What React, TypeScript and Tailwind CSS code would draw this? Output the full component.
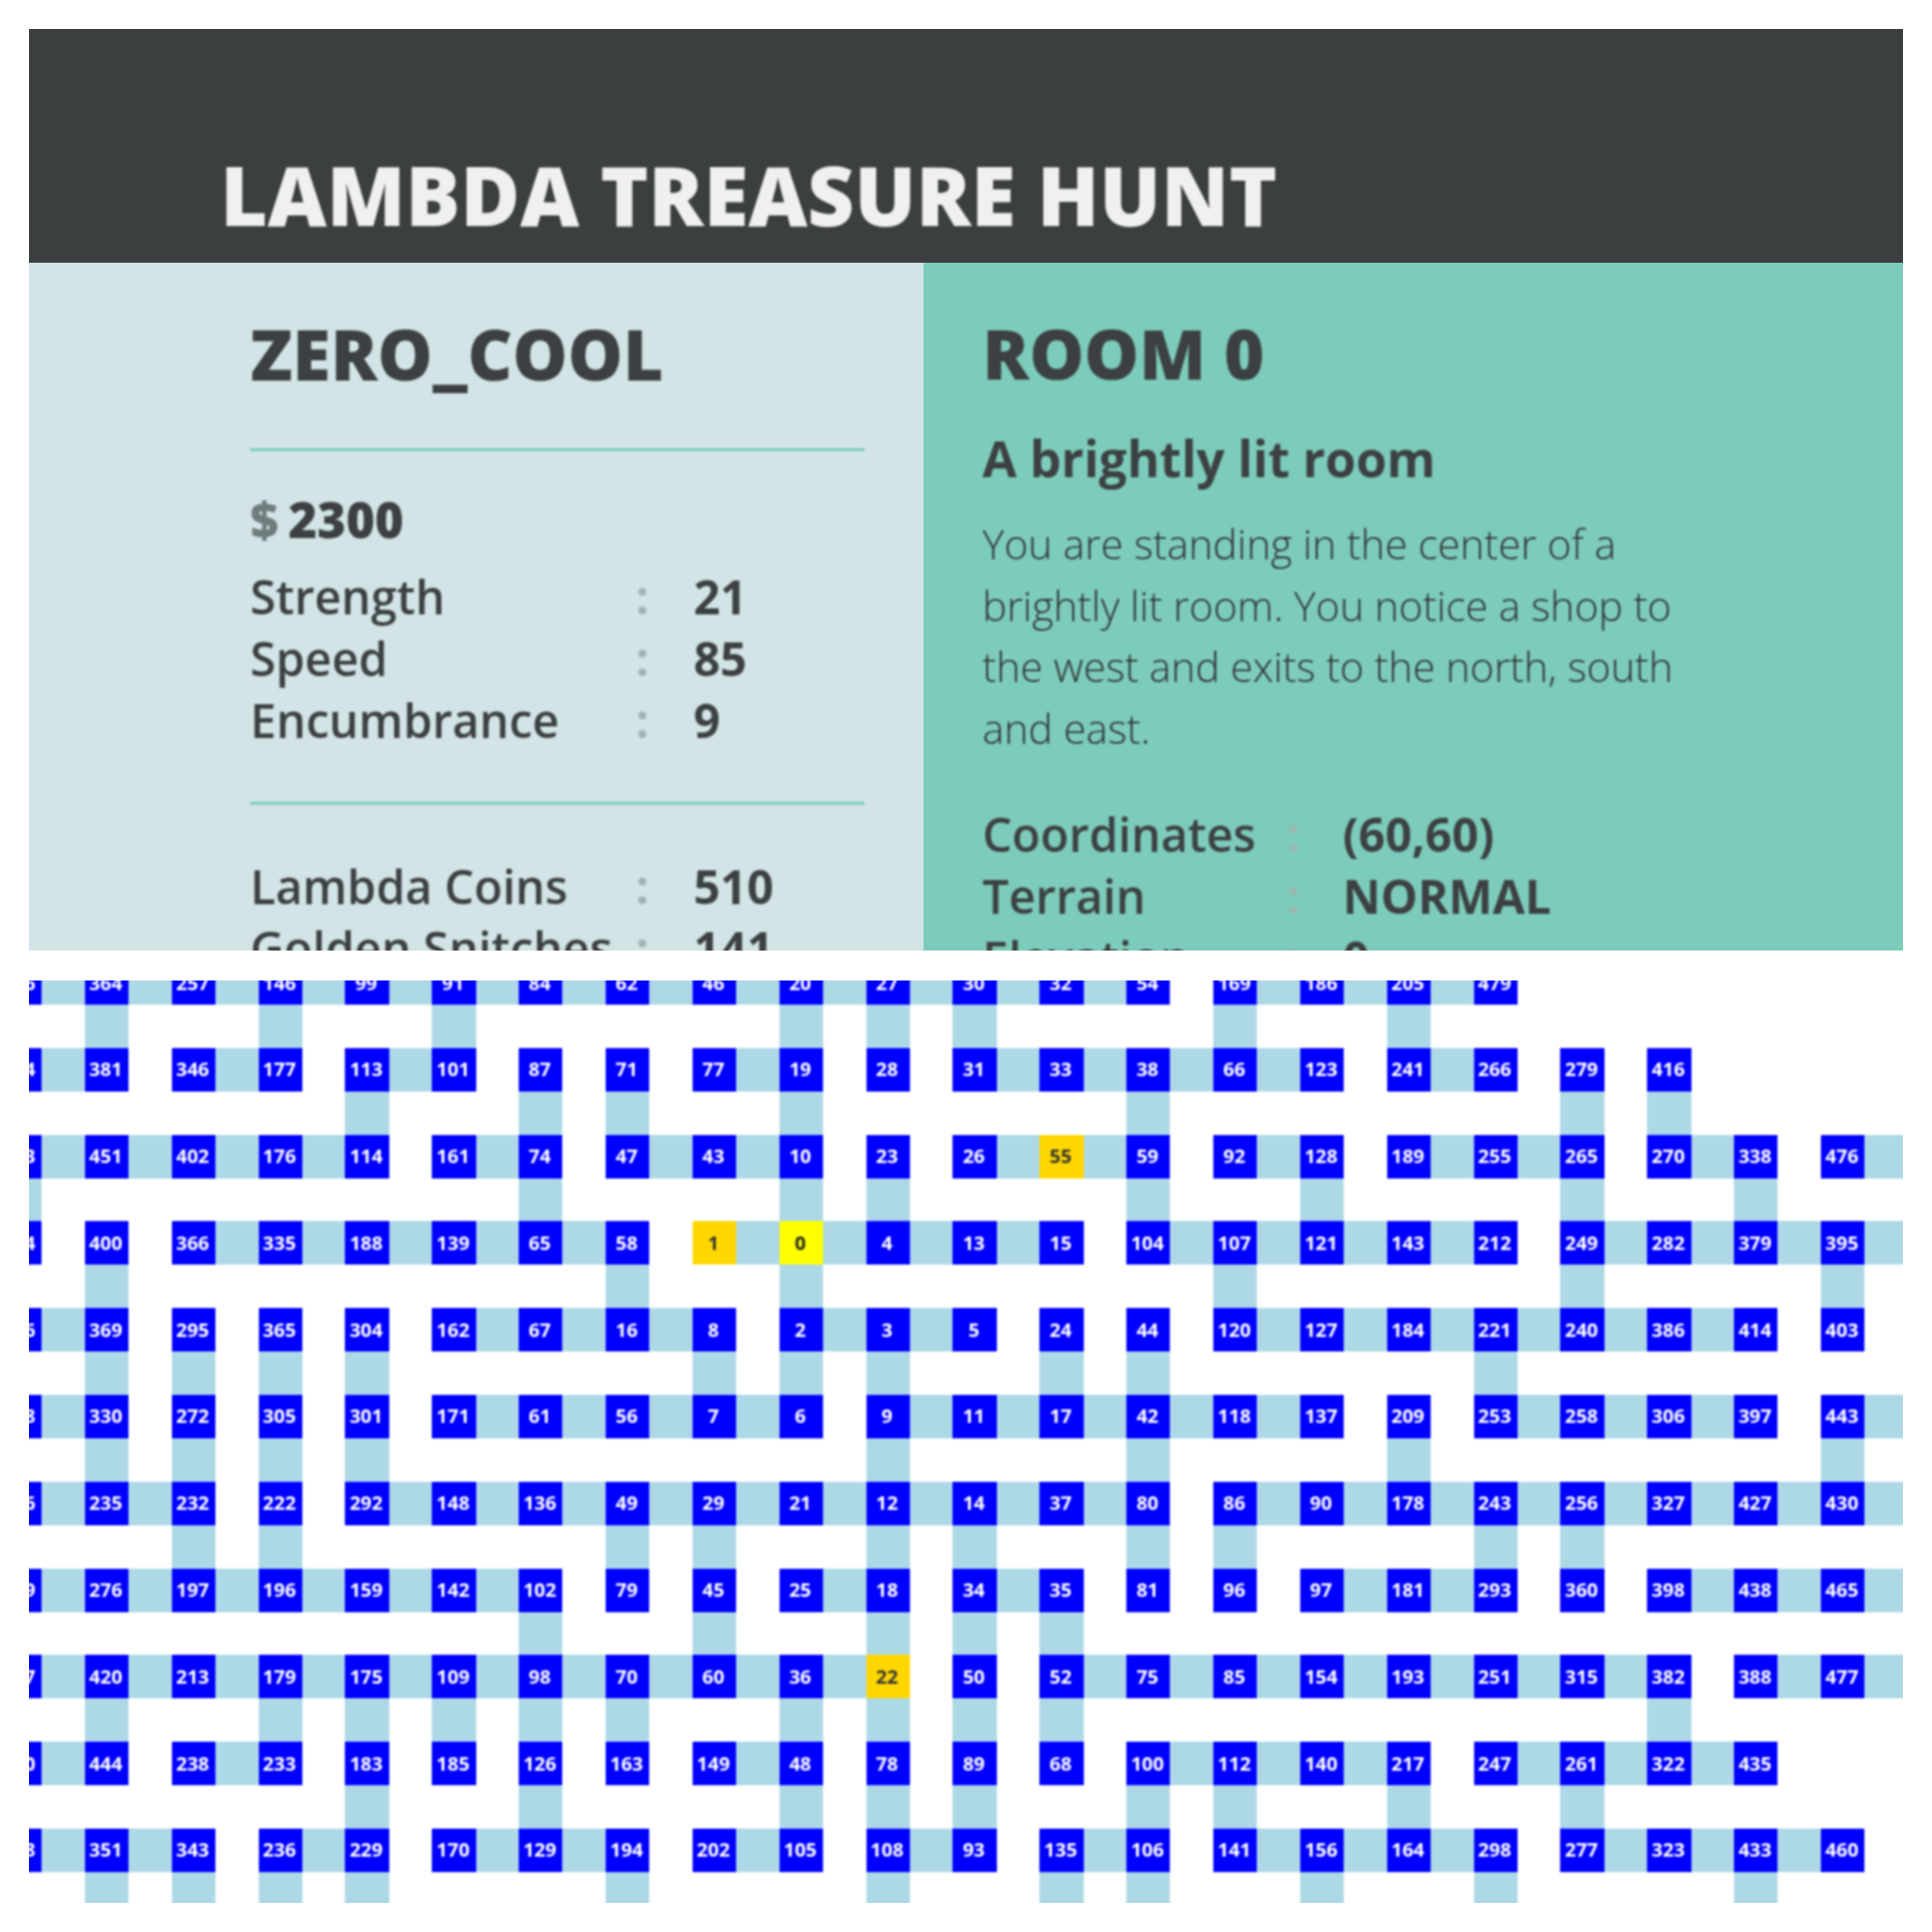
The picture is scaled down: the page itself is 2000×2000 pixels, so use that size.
const ROWS: string[] = [
  '396 364 257 146 99 91 84 62 46 20 27 30 32 54 169 186 205 479 - - - -',
  '424 381 346 177 113 101 87 71 77 19 28 31 33 38 66 123 241 266 279 416 - -',
  '453 451 402 176 114 161 74 47 43 10 23 26 55 59 92 128 189 255 265 270 338 476',
  '434 400 366 335 188 139 65 58 1 0 4 13 15 104 107 121 143 212 249 282 379 395',
  '436 369 295 365 304 162 67 16 8 2 3 5 24 44 120 127 184 221 240 386 414 403',
  '368 330 272 305 301 171 61 56 7 6 9 11 17 42 118 137 209 253 258 306 397 443',
  '246 235 232 222 292 148 136 49 29 21 12 14 37 80 86 90 178 243 256 327 427 430',
  '289 276 197 196 159 142 102 79 45 25 18 34 35 81 96 97 181 293 360 398 438 465',
  '457 420 213 179 175 109 98 70 60 36 22 50 52 75 85 154 193 251 315 382 388 477',
  '470 444 238 233 183 185 126 163 149 48 78 89 68 100 112 140 217 247 261 322 435 -',
  '358 351 343 236 229 170 129 194 202 105 108 93 135 106 141 156 164 298 277 323 433 460',
]

// corridor to the right of each column
const EAST: string[] = [
  '1111111111111011100000',
  '1010100010011110100000',
  '1111010110011010110101',
  '0011111011110111101111',
  '1000011101100011111100',
  '1000011110111110011101',
  '1100111111111011111111',
  '1111110001010001100111',
  '1111111111001111111011',
  '1010000010000111011100',
  '1101011010101011101110',
]

// corridor below each column
const SOUTH: number[][] = [
  [1, 3, 5, 9, 10, 11, 14, 16],
  [4, 6, 7, 9, 13, 18, 19],
  [0, 6, 9, 10, 13, 15, 18, 20],
  [1, 7, 9, 14, 18, 21],
  [1, 2, 3, 4, 8, 9, 10, 12, 13, 17],
  [1, 2, 3, 4, 10, 13, 16, 21],
  [2, 3, 7, 8, 10, 11, 13, 14, 17, 18],
  [6, 8, 10, 11, 12],
  [1, 3, 4, 5, 6, 7, 9, 10, 11, 12, 19],
  [4, 6, 9, 10, 11, 13, 14, 16, 18],
  [1, 2, 3, 4, 7, 10, 12, 13, 15, 17, 20],
]

function tileClass(label: string) {
  if (label === '0') return 'bg-[#ffff00] text-[#222222]'
  if (label === '1' || label === '22' || label === '55') return 'bg-[#ffd700] text-[#333333]'
  return 'bg-[#0000ff] text-white'
}

function TreasureMap() {
  const cells: React.ReactNode[] = []

  ROWS.forEach((row, r) => {
    const labels = row.split(' ')
    labels.forEach((label, c) => {
      cells.push(
        label === '-' ? (
          <div key={`t${r}-${c}`} />
        ) : (
          <div key={`t${r}-${c}`} className={`flex items-center justify-center pr-[2px] text-[20px] font-bold ${tileClass(label)}`}>
            {label}
          </div>
        ),
      )
      cells.push(<div key={`e${r}-${c}`} className={EAST[r][c] === '1' ? 'bg-[#add8e6]' : ''} />)
    })
    labels.forEach((_, c) => {
      cells.push(<div key={`s${r}-${c}`} className={SOUTH[r].includes(c) ? 'bg-[#add8e6]' : ''} />)
      cells.push(<div key={`x${r}-${c}`} />)
    })
  })

  return (
    <div className="mx-[30px] mt-[31px] h-[955px] overflow-hidden">
      <div className="-mt-[20px] -ml-[32px] grid w-max grid-cols-[repeat(22,45.3px_44.57px)] grid-rows-[repeat(11,45px_44.8px)] blur-[0.8px]">
        {cells}
      </div>
    </div>
  )
}

function StatRow({ label, value, cols, colon }: { label: string; value: string; cols: string; colon: string }) {
  return (
    <div className={`grid h-16 items-center text-[48.3px] leading-16 ${cols}`}>
      <span className="font-semibold whitespace-nowrap">{label}</span>
      <span className={`font-bold ${colon}`}>:</span>
      <span className="font-bold whitespace-nowrap">{value}</span>
    </div>
  )
}

export default function App() {
  return (
    <div className="min-h-[2000px] bg-white font-['Open_Sans',sans-serif] text-[#3c4042]">
      <div className="pt-[30px]">
        <div className="mx-[30px] h-[954px] overflow-hidden">
          {/* header */}
          <div className="flex h-[242px] items-end bg-[#3c3f40] pb-[20px] pl-[198px]">
            <h1 className="text-[84.3px] leading-[100px] font-extrabold text-[#f0f0f0] blur-[0.8px]">LAMBDA TREASURE HUNT</h1>
          </div>

          <div className="flex h-[712px]">
            {/* player */}
            <div className="w-[926px] bg-[#d2e4e6] pt-[54px] pl-[229px]">
              <div className="blur-[0.8px]">
                <h2 className="text-[71.8px] leading-20 font-extrabold">ZERO_COOL</h2>
                <div className="mt-[58px] h-[3px] w-[636px] bg-[#7dccbb]" />
                <div className="mt-[40px] flex h-[60px] items-center text-[51px] leading-[60px] font-extrabold">
                  <span className="text-[#6f7b7d]">$</span>
                  <span className="ml-[10px]">2300</span>
                </div>
                <div className="mt-[18px]">
                  <StatRow label="Strength" value="21" cols="grid-cols-[399px_60px_1fr]" colon="text-[#a3b2b4]" />
                  <StatRow label="Speed" value="85" cols="grid-cols-[399px_60px_1fr]" colon="text-[#a3b2b4]" />
                  <StatRow label="Encumbrance" value="9" cols="grid-cols-[399px_60px_1fr]" colon="text-[#a3b2b4]" />
                </div>
                <div className="mt-[53px] h-[3px] w-[636px] bg-[#7dccbb]" />
                <div className="mt-[52px]">
                  <StatRow label="Lambda Coins" value="510" cols="grid-cols-[399px_60px_1fr]" colon="text-[#a3b2b4]" />
                  <StatRow label="Golden Snitches" value="141" cols="grid-cols-[399px_60px_1fr]" colon="text-[#a3b2b4]" />
                </div>
              </div>
            </div>

            {/* room */}
            <div className="flex-1 bg-[#7dccbb] pt-[54px] pl-[61px]">
              <div className="blur-[0.8px]">
                <h2 className="text-[71.5px] leading-20 font-extrabold">ROOM 0</h2>
                <h3 className="mt-[38px] text-[51.5px] leading-[60px] font-bold">A brightly lit room</h3>
                <p className="mt-[27px] w-[750px] text-[42.5px] leading-[63.7px] font-light text-[#2f3335]">
                  You are standing in the center of a brightly lit room. You notice a shop to the west and exits to the north, south and east.
                </p>
                <div className="mt-[45px]">
                  <StatRow label="Coordinates" value="(60,60)" cols="grid-cols-[315px_58px_1fr]" colon="text-[#9ab8b1]" />
                  <StatRow label="Terrain" value="NORMAL" cols="grid-cols-[315px_58px_1fr]" colon="text-[#9ab8b1]" />
                  <StatRow label="Elevation" value="0" cols="grid-cols-[315px_58px_1fr]" colon="text-[#9ab8b1]" />
                </div>
              </div>
            </div>
          </div>
        </div>
      </div>

      <TreasureMap />
    </div>
  )
}
